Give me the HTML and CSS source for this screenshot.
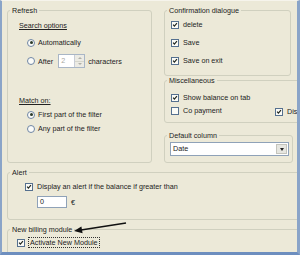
FILE: index.html
```html
<!DOCTYPE html>
<html>
<head>
<meta charset="utf-8">
<link rel="stylesheet" href="styles.css">
</head>
<body>
<div class="window">
  <div class="top">
    <fieldset class="group refresh">
      <legend>Refresh</legend>
      <div class="sub first">Search options</div>
      <div class="opt r1"><span class="radio on"></span>Automatically</div>
      <div class="opt after"><span class="radio"></span>After<span class="spin"><span class="spin-val">2</span><span class="spin-btns"><span class="sb"><i class="up"></i></span><span class="sb"><i class="down"></i></span></span></span>characters</div>
      <div class="sub match">Match on:</div>
      <div class="opt r2"><span class="radio on"></span>First part of the filter</div>
      <div class="opt r2"><span class="radio"></span>Any part of the filter</div>
    </fieldset>
    <div class="right">
      <fieldset class="group confirm">
        <legend>Confirmation dialogue</legend>
        <div class="chk c1"><span class="box on"><svg viewBox="0 0 8 8"><path d="M1.5 3.5 L3.2 5.5 L6.6 1.6" /></svg></span>delete</div>
        <div class="chk c2"><span class="box on"><svg viewBox="0 0 8 8"><path d="M1.5 3.5 L3.2 5.5 L6.6 1.6" /></svg></span>Save</div>
        <div class="chk c2"><span class="box on"><svg viewBox="0 0 8 8"><path d="M1.5 3.5 L3.2 5.5 L6.6 1.6" /></svg></span>Save on exit</div>
      </fieldset>
      <fieldset class="group misc">
        <legend>Miscellaneous</legend>
        <div class="chk m1"><span class="box on"><svg viewBox="0 0 8 8"><path d="M1.5 3.5 L3.2 5.5 L6.6 1.6" /></svg></span>Show balance on tab</div>
        <div class="chk m2"><span class="cp"><span class="box"></span>Co payment</span><span class="disp"><span class="box on"><svg viewBox="0 0 8 8"><path d="M1.5 3.5 L3.2 5.5 L6.6 1.6" /></svg></span>Disp</span></div>
      </fieldset>
      <fieldset class="group defcol">
        <legend>Default column</legend>
        <div class="select"><span class="sel-val">Date</span><span class="sel-btn"><i></i></span></div>
      </fieldset>
    </div>
  </div>
  <fieldset class="group alert">
    <legend>Alert</legend>
    <div class="chk a1"><span class="box on"><svg viewBox="0 0 8 8"><path d="M1.5 3.5 L3.2 5.5 L6.6 1.6" /></svg></span>Display an alert if the balance if greater than</div>
    <div class="amount"><span class="input">0</span><span class="cur">€</span></div>
  </fieldset>
  <fieldset class="group billing">
    <legend>New billing module</legend>
    <div class="chk b1"><span class="box on"><svg viewBox="0 0 8 8"><path d="M1.5 3.5 L3.2 5.5 L6.6 1.6" /></svg></span><span class="focus">Activate New Module</span></div>
  </fieldset>
  <svg class="arrow" width="56" height="16" viewBox="0 0 56 16">
    <line x1="54" y1="4" x2="9" y2="11" stroke="#111" stroke-width="1.6" />
    <polygon points="2,12 10.6,14.2 9.4,7.6" fill="#111" />
  </svg>
</div>
</body>
</html>
```
FILE: styles.css
```css
* { box-sizing: border-box; }
html, body { margin: 0; padding: 0; background: #ECE9D8; }
body {
  width: 300px;
  height: 255px;
  overflow: hidden;
  font-family: "Liberation Sans", Arial, sans-serif;
  font-size: 7.2px;
  line-height: 9px;
  color: #222;
}
.window {
  position: relative;
  width: 300px;
  height: 255px;
  border-left: 2px solid #8aa4c8;
  border-right: 3px solid #8aa4c8;
  border-bottom: 3px solid #6d8ebf;
  border-top: 1px solid #f6f4ec;
  padding: 5px 0 0 5px;
  overflow: hidden;
}
.top {
  display: grid;
  grid-template-columns: 145px 1fr;
  column-gap: 12px;
  height: 157px;
}
.group {
  margin: 0;
  padding: 0;
  min-width: 0;
  border: 1px solid #d0d0bf;
  border-radius: 3px;
}
.group legend {
  padding: 0 2px;
  margin-left: 2px;
  line-height: 9px;
  height: 9px;
}
.refresh { height: 157px; }
.sub { margin-left: 11px; height: 9px; }
.sub.first { margin-top: 6px; text-decoration: underline; }
.sub.match { margin-top: 28px; text-decoration: underline; }
.opt {
  display: flex;
  align-items: center;
  height: 9px;
  margin-left: 19px;
}
.opt.r1 { margin-top: 8px; }
.opt.after { margin-top: 7px; height: 14px; }
.opt.r2 { margin-top: 5px; }
.radio {
  width: 8px;
  height: 8px;
  border-radius: 50%;
  border: 1px solid #6f86a4;
  background: #fbfbf8;
  margin-right: 3px;
  display: flex;
  align-items: center;
  justify-content: center;
  flex: none;
}
.radio.on::after {
  content: "";
  width: 3px;
  height: 3px;
  border-radius: 50%;
  background: #2a3a2a;
}
.spin {
  display: flex;
  width: 27px;
  height: 14px;
  margin-left: 5px;
  margin-right: 3px;
  border: 1px solid #a9b6c6;
  background: #fff;
}
.spin-val {
  flex: 1;
  color: #a8a8a0;
  padding-left: 2px;
  line-height: 12px;
}
.spin-btns {
  width: 10px;
  display: flex;
  flex-direction: column;
  border-left: 1px solid #c8cdd6;
}
.sb {
  flex: 1;
  background: #ecebe4;
  display: flex;
  align-items: center;
  justify-content: center;
}
.sb + .sb { border-top: 1px solid #d6d6cc; }
.sb i {
  width: 0;
  height: 0;
  border-left: 2px solid transparent;
  border-right: 2px solid transparent;
}
.sb i.up { border-bottom: 2px solid #b0b0a8; }
.sb i.down { border-top: 2px solid #b0b0a8; }

.right {
  display: flex;
  flex-direction: column;
  align-items: flex-start;
}
.confirm { width: 127px; height: 70px; }
.misc { width: 170px; height: 47px; }
.defcol { width: 129px; height: 32px; margin-top: 8px; }

.chk {
  display: flex;
  align-items: center;
  height: 9px;
  margin-left: 6px;
  white-space: nowrap;
}
.box {
  width: 8px;
  height: 8px;
  border: 1px solid #55708f;
  background: #fbfbf6;
  margin-right: 4px;
  flex: none;
  display: block;
}
.box svg {
  display: block;
  width: 6px;
  height: 6px;
}
.box svg path {
  fill: none;
  stroke: #1e241e;
  stroke-width: 1.6;
}
.c1 { margin-top: 5px; }
.c2 { margin-top: 9px; }
.m1 { margin-top: 8px; }
.m2 { margin-top: 4px; }
.cp { display: flex; align-items: center; width: 104px; }
.disp { display: flex; align-items: center; margin-top: 2px; }

.select {
  display: flex;
  margin: 2px 0 0 5px;
  width: 119px;
  height: 14px;
  border: 1px solid #8fa2b8;
  background: #fff;
}
.sel-val { flex: 1; padding-left: 2px; line-height: 12px; }
.sel-btn {
  width: 11px;
  margin: 1px;
  background: #e6e6e0;
  border: 1px solid #c4c4bc;
  display: flex;
  align-items: center;
  justify-content: center;
}
.sel-btn i {
  width: 0;
  height: 0;
  border-left: 2.5px solid transparent;
  border-right: 2.5px solid transparent;
  border-top: 3px solid #222;
}

.alert {
  margin-top: 5px;
  width: 310px;
  height: 52px;
}
.a1 { margin-top: 5px; margin-left: 17px; }
.amount {
  display: flex;
  align-items: center;
  margin: 5px 0 0 29px;
  height: 12px;
}
.input {
  width: 30px;
  height: 12px;
  border: 1px solid #8fa2b8;
  background: #fff;
  padding-left: 2px;
  line-height: 10px;
}
.cur { margin-left: 4px; }

.billing {
  margin-top: 5px;
  width: 310px;
  height: 40px;
}
.b1 { margin-top: 3px; margin-left: 9px; height: 11px; }
.b1 .box { margin-right: 3px; }
.focus {
  border: 1px dotted #333;
  padding: 0 1px;
  line-height: 9px;
}
.arrow {
  position: absolute;
  left: 70px;
  top: 218px;
}
```
